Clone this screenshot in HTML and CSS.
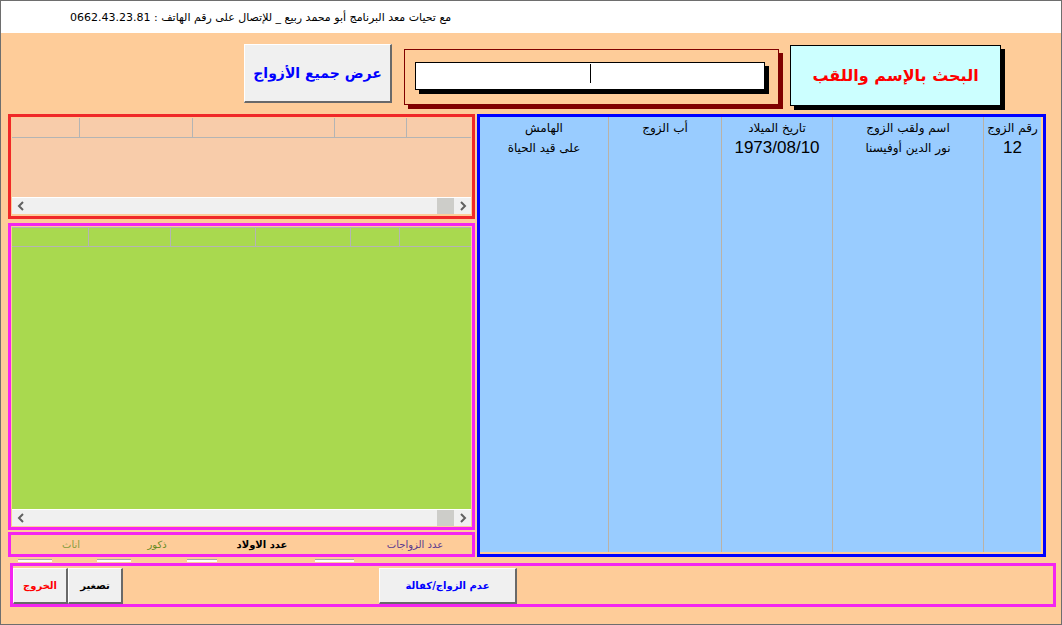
FILE: index.html
```html
<!DOCTYPE html>
<html lang="ar">
<head>
    <meta charset="UTF-8">
    <title>البحث عن الأزواج</title>
    <link rel="stylesheet" href="styles.css">
</head>
<body>
<div class="window">
    <div class="title-bar"><span>مع تحيات معد البرنامج أبو محمد ربيع _ للإتصال على رقم الهاتف : 0662.43.23.81</span></div>

    <div class="top-row">
        <div class="vb-button show-all">عرض جميع الأزواج</div>
        <div class="search-frame">
            <div class="search-input"><span class="caret"></span></div>
        </div>
        <div class="search-label">البحث بالإسم واللقب</div>
    </div>

    <div class="middle">
        <div class="left-col">
            <div class="red-box">
                <div class="grid grid-peach">
                    <div class="grid-head">
                        <span style="width:68px"></span><span style="width:113px"></span><span style="width:142px"></span><span style="width:72px"></span><span class="last"></span>
                    </div>
                    <div class="grid-body"></div>
                    <div class="scrollbar">
                        <span class="arrow"><svg width="8" height="10" viewBox="0 0 8 10"><path d="M6 1 L2 5 L6 9" fill="none" stroke="#606060" stroke-width="2"/></svg></span>
                        <span class="track"></span>
                        <span class="thumb"></span>
                        <span class="arrow"><svg width="8" height="10" viewBox="0 0 8 10"><path d="M2 1 L6 5 L2 9" fill="none" stroke="#606060" stroke-width="2"/></svg></span>
                    </div>
                </div>
            </div>

            <div class="magenta-box children">
                <div class="grid grid-green">
                    <div class="grid-head">
                        <span style="width:77px"></span><span style="width:82px"></span><span style="width:85px"></span><span style="width:95px"></span><span style="width:49px"></span><span class="last"></span>
                    </div>
                    <div class="grid-body"></div>
                    <div class="scrollbar">
                        <span class="arrow"><svg width="8" height="10" viewBox="0 0 8 10"><path d="M6 1 L2 5 L6 9" fill="none" stroke="#606060" stroke-width="2"/></svg></span>
                        <span class="track"></span>
                        <span class="thumb"></span>
                        <span class="arrow"><svg width="8" height="10" viewBox="0 0 8 10"><path d="M2 1 L6 5 L2 9" fill="none" stroke="#606060" stroke-width="2"/></svg></span>
                    </div>
                </div>
            </div>

            <div class="magenta-box counts">
                <span class="count c-marriages">عدد الزواجات</span>
                <span class="count c-children">عدد الاولاد</span>
                <span class="count c-males">ذكور</span>
                <span class="count c-females">اناث</span>
            </div>
        </div>

        <div class="blue-box">
            <div class="blue-table">
                <div class="col" style="width:58px">
                    <div class="th">رقم الزوج</div>
                    <div class="td big">12</div>
                </div>
                <div class="col" style="width:151px">
                    <div class="th">اسم ولقب الزوج</div>
                    <div class="td">نور الدين أوفيسنا</div>
                </div>
                <div class="col" style="width:111px">
                    <div class="th">تاريخ الميلاد</div>
                    <div class="td big">1973/08/10</div>
                </div>
                <div class="col" style="width:113px">
                    <div class="th">أب الزوج</div>
                    <div class="td"></div>
                </div>
                <div class="col last">
                    <div class="th">الهامش</div>
                    <div class="td">على قيد الحياة</div>
                </div>
            </div>
        </div>
    </div>

    <div class="hidden-boxes">
        <span style="margin-left:17px;width:34px"></span>
        <span style="margin-left:45px;width:34px"></span>
        <span style="margin-left:56px;width:30px"></span>
        <span style="margin-left:98px;width:39px"></span>
    </div>

    <div class="magenta-box bottom-bar">
        <div class="vb-button small-btn exit">الخروج</div>
        <div class="vb-button small-btn">تصغير</div>
        <div class="vb-button small-btn not-married">عدم الزواج/كفالة</div>
    </div>
</div>
</body>
</html>
```

FILE: styles.css
```css
body {
    margin: 0;
    background: #fff;
    font-family: "Liberation Sans", "DejaVu Sans", sans-serif;
    color: #000;
}

.window {
    width: 1062px;
    height: 625px;
    box-sizing: border-box;
    border: 1px solid #6e6e6e;
    background: #fecc99;
    display: flex;
    flex-direction: column;
}

.title-bar {
    height: 32px;
    flex-shrink: 0;
    background: #fff;
    display: flex;
    align-items: center;
    padding-left: 69px;
    font-size: 11px;
    font-family: "DejaVu Sans", sans-serif;
}

.title-bar span {
    direction: rtl;
    unicode-bidi: embed;
}

/* top search row */
.top-row {
    height: 81px;
    flex-shrink: 0;
    display: flex;
    align-items: flex-start;
    padding-left: 243px;
}

.vb-button {
    box-sizing: border-box;
    background: #f0f0f0;
    border-style: solid;
    border-width: 1px 2px 2px 1px;
    border-color: #fff #696969 #696969 #fff;
    display: flex;
    align-items: center;
    justify-content: center;
    font-family: "DejaVu Sans", sans-serif;
    font-weight: bold;
    direction: rtl;
}

.show-all {
    margin-top: 11px;
    width: 148px;
    height: 59px;
    color: #0000ff;
    font-size: 14px;
}

.search-frame {
    margin-top: 16px;
    margin-left: 12px;
    width: 375px;
    height: 56px;
    box-sizing: border-box;
    border: 1px solid #800000;
    box-shadow: 4px 4px 0 #800000;
    padding: 12px 0 0 10px;
}

.search-input {
    width: 350px;
    height: 28px;
    box-sizing: border-box;
    background: #fff;
    border: 1px solid #000;
    box-shadow: 4px 4px 0 #000;
    display: flex;
    justify-content: center;
    padding-top: 1px;
}

.caret {
    width: 1px;
    height: 19px;
    background: #000;
}

.search-label {
    margin-top: 12px;
    margin-left: 11px;
    width: 211px;
    height: 61px;
    box-sizing: border-box;
    background: #ccffff;
    border: 1px solid #000;
    box-shadow: 4px 4px 0 #000;
    display: flex;
    align-items: center;
    justify-content: center;
    color: #ff0000;
    font-family: "DejaVu Sans", sans-serif;
    font-weight: bold;
    font-size: 16px;
    direction: rtl;
}

/* middle area */
.middle {
    height: 443px;
    flex-shrink: 0;
    display: flex;
    gap: 2px;
    padding-left: 7px;
}

.left-col {
    width: 467px;
    display: flex;
    flex-direction: column;
}

.red-box {
    height: 105px;
    box-sizing: border-box;
    border: 3px solid #f02828;
    padding: 1px 1px 2px 1px;
}

.magenta-box {
    box-sizing: border-box;
    border: 3px solid #f424f0;
}

.children {
    height: 307px;
    margin-top: 4px;
    padding: 1px;
}

.grid {
    height: 100%;
    display: flex;
    flex-direction: column;
}

.grid-peach { background: #f8ccaa; }
.grid-green { background: #a9d94f; }

.grid-head {
    height: 20px;
    flex-shrink: 0;
    box-sizing: border-box;
    border-bottom: 1px solid #b4b4b4;
    display: flex;
}

.grid-green .grid-head {
    border-top: 1px solid #b4b4b4;
}

.grid-head span {
    box-sizing: border-box;
    border-right: 1px solid #b4b4b4;
    flex-shrink: 0;
}

.grid-head span.last {
    flex: 1;
    border-right: none;
}

.grid-body {
    flex: 1;
}

.scrollbar {
    height: 17px;
    flex-shrink: 0;
    box-sizing: border-box;
    border-top: 1px solid #fff;
    background: #f0f0f0;
    display: flex;
    align-items: center;
}

.scrollbar .arrow {
    width: 17px;
    display: flex;
    justify-content: center;
}

.scrollbar .track { flex: 1; }

.scrollbar .thumb {
    width: 17px;
    height: 16px;
    background: #cdcdc9;
}

.counts {
    height: 25px;
    margin-top: 2px;
    display: flex;
    direction: rtl;
    align-items: center;
    font-family: "DejaVu Sans", sans-serif;
    font-size: 10px;
}

.count {
    width: 60px;
    text-align: center;
    white-space: nowrap;
}

.c-marriages { margin-right: 27px; color: #5a3a90; }
.c-children { margin-right: 93px; color: #000; font-weight: bold; }
.c-males { margin-right: 45px; color: #668a22; }
.c-females { margin-right: 26px; color: #869c3e; }

/* husbands table */
.blue-box {
    width: 569px;
    height: 443px;
    box-sizing: border-box;
    border: 3px solid #0000ff;
    padding: 0 2px 2px 0;
}

.blue-table {
    height: 100%;
    background: #99ccff;
    display: flex;
    direction: rtl;
    font-family: "DejaVu Sans", sans-serif;
    font-size: 12px;
}

.col {
    box-sizing: border-box;
    border-left: 1px solid #bab2a6;
    flex-shrink: 0;
}

.col.last {
    flex: 1;
    border-left: none;
}

.th {
    height: 21px;
    line-height: 22px;
    text-align: center;
}

.td {
    height: 20px;
    line-height: 20px;
    text-align: center;
}

.td.big {
    font-family: "Liberation Sans", sans-serif;
    font-size: 17px;
}

.hidden-boxes {
    height: 6px;
    flex-shrink: 0;
    display: flex;
}

.hidden-boxes span {
    margin-top: 2px;
    height: 2px;
    background: #fff;
    border-top: 1px solid #a8a8a8;
}

/* bottom buttons */
.bottom-bar {
    margin-left: 9px;
    width: 1046px;
    height: 44px;
    padding-top: 2px;
    display: flex;
    align-items: flex-start;
}

.small-btn {
    width: 55px;
    height: 36px;
    font-size: 10px;
}

.exit { color: #ff0000; }

.not-married {
    width: 138px;
    margin-left: 256px;
    color: #0000ff;
}
```
